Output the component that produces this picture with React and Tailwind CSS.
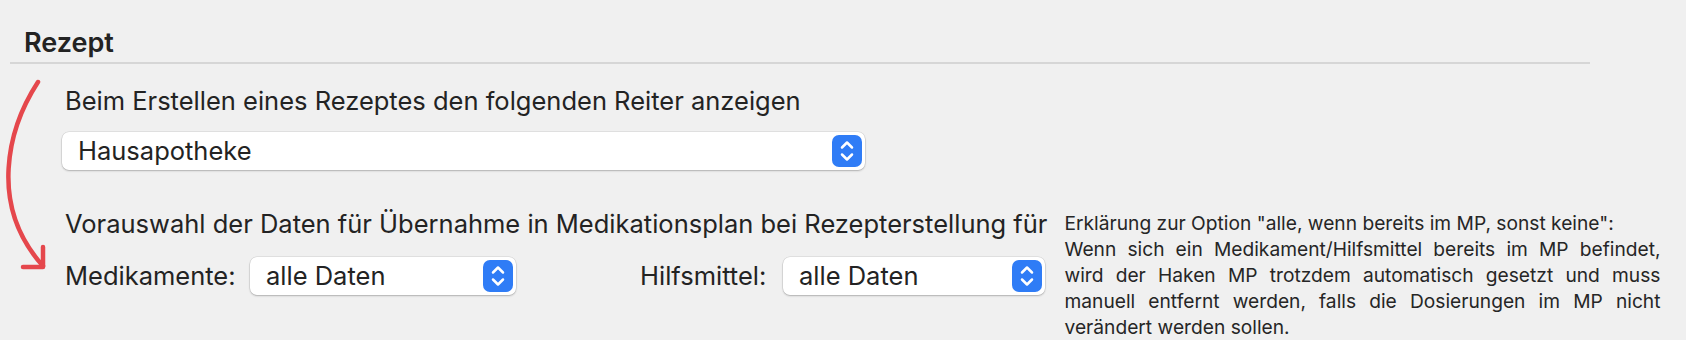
const Stepper = () => (
  <div className="w-[30px] h-[32px] rounded-[7px] bg-[#2f7cf6] flex items-center justify-center">
    <svg width="16" height="26" viewBox="0 0 16 26" fill="none" stroke="white" strokeWidth="2.5" strokeLinecap="round" strokeLinejoin="round">
      <path d="M3 9.5 L8 4.5 L13 9.5" />
      <path d="M3 16.5 L8 21.5 L13 16.5" />
    </svg>
  </div>
);

const Select = ({ value, className }) => (
  <div
    className={
      "h-[38px] bg-white rounded-[7px] flex items-center justify-between pl-[16px] pr-[3px] shadow-[0_0_0_0.5px_rgba(0,0,0,0.12),0_1px_2px_rgba(0,0,0,0.22)] " +
      className
    }
  >
    <span className="text-[25.5px] text-[#232323]">{value}</span>
    <Stepper />
  </div>
);

export default function App() {
  return (
    <div className="relative w-[1686px] h-[340px] bg-[#f0f0f0] overflow-hidden font-['Inter','Liberation_Sans',sans-serif] text-[#232323]">
      <div className="pt-[26px] pl-[24px] text-[27px] font-semibold leading-[34px]">Rezept</div>
      <div className="ml-[10px] mt-[2px] w-[1580px] h-[2px] bg-[#d6d6d6]" />

      <div className="flex pl-[62px]">
        <div className="flex flex-col">
          <div className="pl-[3px] mt-[21px] text-[25.5px] leading-[32px]">
            Beim Erstellen eines Rezeptes den folgenden Reiter anzeigen
          </div>
          <Select value="Hausapotheke" className="mt-[15px] w-[803px]" />
          <div className="pl-[3px] mt-[38px] text-[25.5px] leading-[32px] whitespace-nowrap">
            Vorauswahl der Daten für Übernahme in Medikationsplan bei Rezepterstellung für
          </div>
          <div className="flex items-center mt-[17px]">
            <span className="pl-[3px] w-[188px] text-[25.5px]">Medikamente:</span>
            <Select value="alle Daten" className="w-[266px]" />
            <span className="ml-[124px] w-[143px] text-[25.5px]">Hilfsmittel:</span>
            <Select value="alle Daten" className="w-[262px]" />
          </div>
        </div>
        <div className="ml-[17px] mt-[146px] w-[596px] text-[19.2px] leading-[26px] text-[#262626] text-justify">
          Erklärung zur Option "alle, wenn bereits im MP, sonst keine":
          <br />
          Wenn sich ein Medikament/Hilfsmittel bereits im MP befindet, wird der Haken MP trotzdem automatisch gesetzt und muss manuell entfernt werden, falls die Dosierungen im MP nicht verändert werden sollen.
        </div>
      </div>

      <svg className="absolute left-0 top-0" width="80" height="300" viewBox="0 0 80 300" fill="none" stroke="#e5474c" strokeWidth="4.5" strokeLinecap="round" strokeLinejoin="round">
        <path d="M38 82 C 8 128, -12 205, 43 266" />
        <path d="M43 247 L43 267 L23 267" />
      </svg>
    </div>
  );
}
